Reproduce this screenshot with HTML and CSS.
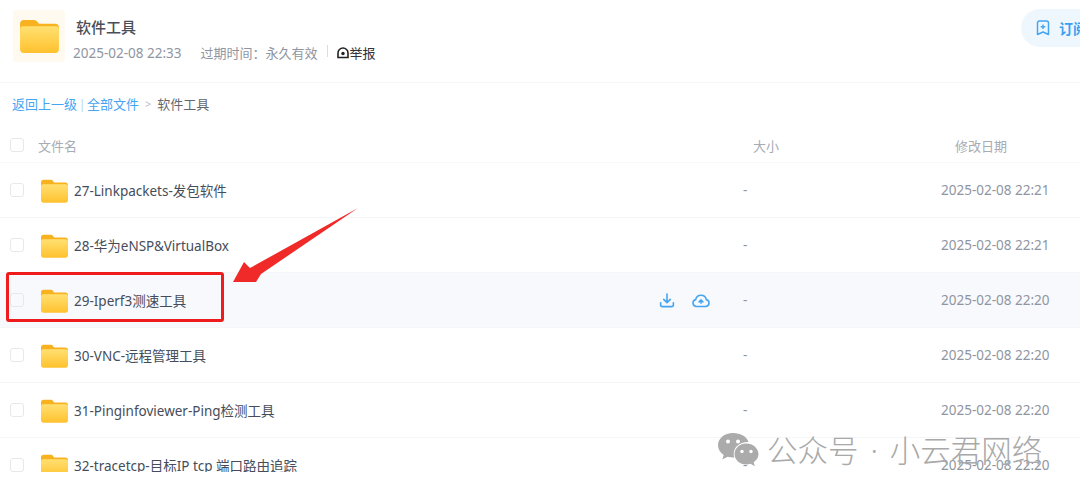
FILE: index.html
```html
<!DOCTYPE html>
<html lang="zh">
<head>
<meta charset="utf-8">
<title>软件工具</title>
<link rel="stylesheet" href="styles.css">
</head>
<body>
<svg class="defs" width="0" height="0" aria-hidden="true">
  <defs>
    <linearGradient id="fg" x1="0" y1="0" x2="0" y2="1">
      <stop offset="0" stop-color="#ffe071"/>
      <stop offset="1" stop-color="#ffc12e"/>
    </linearGradient>
    <symbol id="folder" viewBox="0 0 40 35">
      <path d="M0 5a4 4 0 0 1 4-4h10c2 0 3 .8 4 2l1.500 2H36a4 4 0 0 1 4 4v6H0z" fill="#f9b21f"/>
      <path d="M0 10a3 3 0 0 1 3-2.500h34a3 3 0 0 1 3 2.500v21a4 4 0 0 1-4 4H4a4 4 0 0 1-4-4z" fill="url(#fg)"/>
    </symbol>
  </defs>
</svg>
<main class="page">
  <header class="top">
    <div class="thumb"><svg class="thumb-icon"><use href="#folder"/></svg></div>
    <div class="info">
      <h1 class="title">软件工具</h1>
      <div class="meta">
        <span class="stamp">2025-02-08 22:33</span>
        <span class="expire">过期时间：永久有效</span>
        <span class="sep"></span>
        <span class="report">
          <svg class="report-icon" viewBox="0 0 12 12"><path d="M1 10.500V6a5 5 0 0 1 10 0v4.500z" fill="none" stroke="#222" stroke-width="1.600"/><circle cx="6" cy="6.500" r="1.700" fill="#222"/></svg>举报
        </span>
      </div>
    </div>
    <button class="subscribe">
      <svg class="sub-icon" viewBox="0 0 14 16"><path d="M1.500 3a2 2 0 0 1 2-2h7a2 2 0 0 1 2 2v11.500L7 12l-5.500 2.500z" fill="none" stroke="#45a5f0" stroke-width="1.500" stroke-linejoin="round"/><path d="M7 4.500v4.500M4.700 6.700h4.600" stroke="#45a5f0" stroke-width="1.400"/></svg>
      <span>订阅</span>
    </button>
  </header>

  <nav class="crumbs">
    <a class="link">返回上一级</a><span class="bar">|</span><a class="link">全部文件</a><span class="gt">&gt;</span><span class="here">软件工具</span>
  </nav>

  <div class="row head">
    <span class="check"></span>
    <span class="name-head">文件名</span>
    <span class="size-head">大小</span>
    <span class="date-head">修改日期</span>
  </div>

  <div class="row">
    <span class="check"></span>
    <svg class="folder"><use href="#folder"/></svg>
    <span class="name">27-Linkpackets-发包软件</span>
    <span class="size">-</span>
    <span class="date">2025-02-08 22:21</span>
  </div>
  <div class="row">
    <span class="check"></span>
    <svg class="folder"><use href="#folder"/></svg>
    <span class="name">28-华为eNSP&amp;VirtualBox</span>
    <span class="size">-</span>
    <span class="date">2025-02-08 22:21</span>
  </div>
  <div class="row hover">
    <span class="check"></span>
    <svg class="folder"><use href="#folder"/></svg>
    <span class="name">29-Iperf3测速工具</span>
    <span class="actions">
      <svg class="act" viewBox="0 0 16 16"><path d="M8 1v9M4.500 6.800 8 10.300l3.500-3.500M1.200 10.500v2a2 2 0 0 0 2 2h9.600a2 2 0 0 0 2-2v-2" fill="none" stroke="#45a5f0" stroke-width="1.700" stroke-linecap="round" stroke-linejoin="round"/></svg>
      <svg class="act" viewBox="0 0 18 15"><path d="M4.500 13.500a3.500 3.500 0 0 1-.8-6.900 5.400 5.400 0 0 1 10.600 0 3.500 3.500 0 0 1-.8 6.900z" fill="none" stroke="#45a5f0" stroke-width="1.600" stroke-linejoin="round"/><path d="M9 11V7.500M6.800 9 9 6.700 11.200 9z" fill="#45a5f0" stroke="#45a5f0" stroke-width="1.200" stroke-linejoin="round"/></svg>
    </span>
    <span class="size">-</span>
    <span class="date">2025-02-08 22:20</span>
  </div>
  <div class="row">
    <span class="check"></span>
    <svg class="folder"><use href="#folder"/></svg>
    <span class="name">30-VNC-远程管理工具</span>
    <span class="size">-</span>
    <span class="date">2025-02-08 22:20</span>
  </div>
  <div class="row">
    <span class="check"></span>
    <svg class="folder"><use href="#folder"/></svg>
    <span class="name">31-Pinginfoviewer-Ping检测工具</span>
    <span class="size">-</span>
    <span class="date">2025-02-08 22:20</span>
  </div>
  <div class="row">
    <span class="check"></span>
    <svg class="folder"><use href="#folder"/></svg>
    <span class="name">32-tracetcp-目标IP tcp 端口路由追踪</span>
    <span class="size">-</span>
    <span class="date">2025-02-08 22:20</span>
  </div>
</main>

<div class="redbox"></div>
<svg class="arrow" viewBox="0 0 127 76"><path d="M126 1 29 67 24 75 1 75 12 55 18 61z" fill="#f02a28"/></svg>

<div class="mark">
  <svg class="wechat" viewBox="0 0 42 36">
    <path d="M16 1C7.500 1 1 6.500 1 13.300c0 4 2.200 7.300 5.700 9.600L5.300 27.500l5.300-2.800c1.600.4 3.500.7 5.400.7h1.300a11 11 0 0 1-.6-3.500c0-6.700 6.200-11.800 13.900-11.800h1C30 4.700 23.600 1 16 1z" fill="#ababab"/>
    <path d="M41.500 22c0-5.800-5.800-10.500-12-10.500-6.800 0-12 4.700-12 10.500s5.200 10.500 12 10.500c1.500 0 2.800-.3 4.100-.7l4.200 2.400-1.100-3.900c2.900-2 4.800-5 4.800-8.300z" fill="#ababab"/>
    <circle cx="11" cy="9.500" r="2" fill="#fff"/><circle cx="21" cy="9.500" r="2" fill="#fff"/>
    <circle cx="25" cy="19.500" r="1.700" fill="#fff"/><circle cx="34" cy="19.500" r="1.700" fill="#fff"/>
  </svg>
  <span class="mark-text">公众号 · 小云君网络</span>
</div>
</body>
</html>
```
FILE: styles.css
```css
* { box-sizing: border-box; }
html, body { margin: 0; height: 495px; overflow: hidden; background: #fff; }
body { position: relative; font-family: "Noto Sans", "Noto Sans CJK SC", sans-serif; color: #454d5a; }
.defs { position: absolute; }
.page { height: 472px; overflow: hidden; }

.top { height: 83px; border-bottom: 1px solid #f5f6f8; padding: 10px 0 0 13px; display: flex; align-items: flex-start; position: relative; }
.thumb { width: 52px; height: 52px; background: #fffaf0; display: flex; align-items: center; justify-content: center; border-radius: 4px; }
.thumb-icon { width: 39px; height: 34px; }
.info { margin-left: 8px; }
.title { margin: 5px 0 0 3px; font-size: 15px; line-height: 24px; font-weight: 500; color: #4a4f57; }
.meta { display: flex; align-items: center; margin-top: 4px; font-size: 13px; line-height: 20px; color: #8f95a1; }
.stamp { font-size: 13.500px; white-space: nowrap; }
.expire { margin-left: 19px; white-space: nowrap; }
.sep { width: 1px; height: 12px; background: #d9dce1; margin: 0 9px; position: relative; top: -2px; flex: none; }
.report { display: flex; align-items: center; color: #333; white-space: nowrap; }
.report-icon { width: 12px; height: 12px; margin-right: 1px; }
.subscribe { position: absolute; left: 1021px; top: 9px; width: 59px; height: 38px; border: 0; border-radius: 19px 0 0 19px; background: #eef7fe; display: flex; align-items: center; gap: 9px; padding: 0 0 0 15px; color: #3d9ff0; font: 600 14px "Noto Sans", "Noto Sans CJK SC", sans-serif; overflow: hidden; white-space: nowrap; }
.sub-icon { width: 14px; height: 16px; flex: none; }

.crumbs { height: 41px; display: flex; align-items: center; padding-left: 12px; font-size: 13px; }
.link { color: #45a5f0; }
.bar { color: #b9d9f2; margin: 0 1px; width: 8px; text-align: center; }
.gt { color: #b8bcc4; margin: 0 6px; font-size: 11px; }
.here { color: #62676f; }

.row { height: 55px; display: flex; align-items: center; border-bottom: 1px solid #f5f6f8; padding-left: 10px; position: relative; font-size: 13.500px; }
.row.head { height: 39px; padding-top: 4px; font-size: 13px; color: #a6abb5; border-bottom-color: #f7f8fa; }
.hover { background: #f7f9fc; }
.check { width: 14px; height: 14px; border: 1px solid #e6e8ec; border-radius: 3px; background: #fff; flex: none; }
.hover .check { background: transparent; }
.name-head { margin-left: 14px; }
.size-head { margin-left: 676px; width: 26px; }
.date-head { margin-left: 176px; }
.folder { width: 27px; height: 24px; margin-left: 17px; flex: none; position: relative; top: 1px; }
.name { margin-left: 6px; color: #454d5a; white-space: nowrap; }
.size, .date, .actions { position: absolute; top: 0; bottom: 0; display: flex; align-items: center; }
.size { left: 743px; color: #8f95a1; }
.date { left: 941px; color: #8f95a1; white-space: nowrap; }
.actions { left: 659px; gap: 17px; }
.act { width: 16px; height: 15px; }
.act + .act { width: 18px; }

.redbox { position: absolute; left: 6px; top: 272px; width: 218px; height: 50px; border: 3px solid #ee1c1c; border-radius: 3px; }
.arrow { position: absolute; left: 232px; top: 207px; width: 127px; height: 76px; }
.mark { position: absolute; left: 717px; top: 432px; display: flex; align-items: center; gap: 8px; }
.wechat { width: 42px; height: 36px; flex: none; }
.mark-text { font-size: 30.500px; line-height: 36px; color: #a9a9a9; white-space: nowrap; word-spacing: 4px; font-family: "Noto Sans", "Noto Sans CJK SC", sans-serif; font-weight: 300; }
```
